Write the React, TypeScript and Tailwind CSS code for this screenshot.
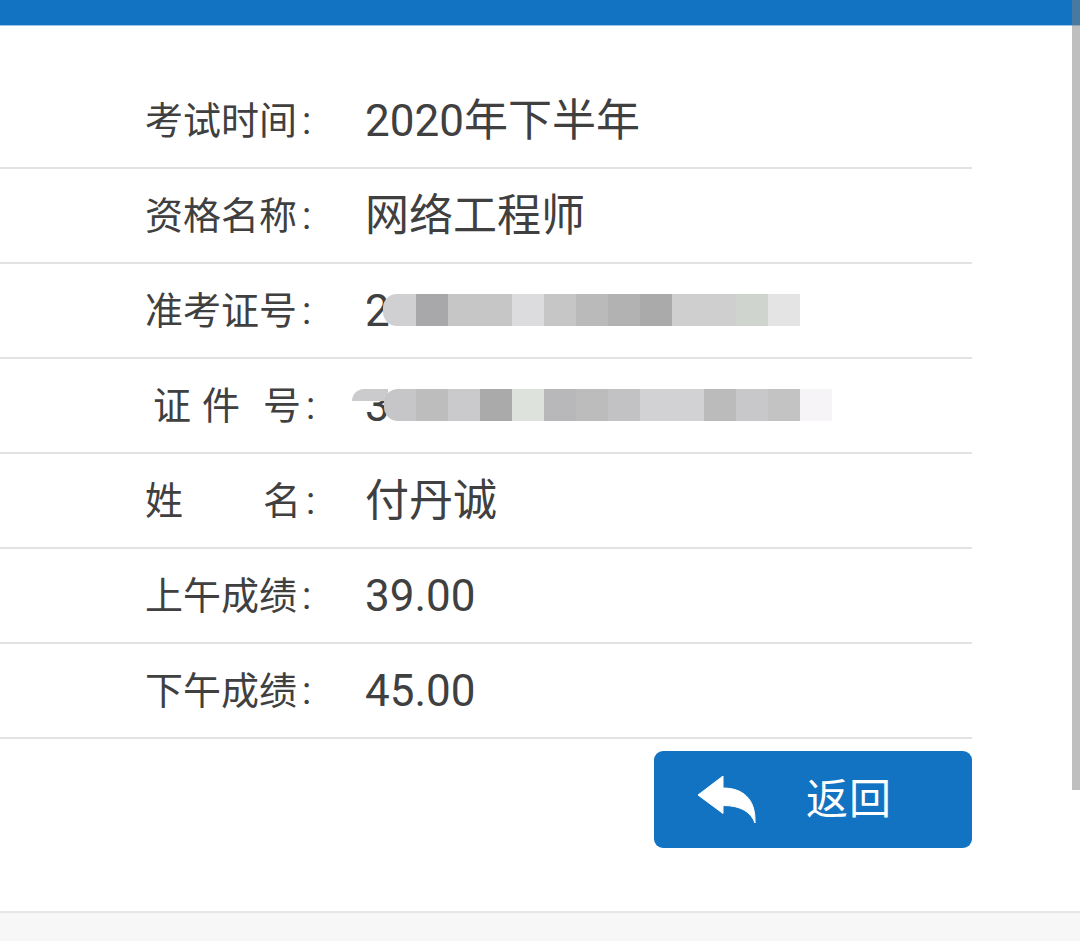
import React from "react";

const font = { fontFamily: 'Roboto, "Noto Sans CJK SC", sans-serif' };

type Block = { w: number; c: string };

const row3Blocks: Block[] = [
  { w: 33, c: "#d0d0d2" },
  { w: 32, c: "#a8a7a9" },
  { w: 64, c: "#c6c6c6" },
  { w: 32, c: "#dcdbdd" },
  { w: 32, c: "#c6c6c6" },
  { w: 32, c: "#bababa" },
  { w: 32, c: "#b2b2b2" },
  { w: 32, c: "#aaaaaa" },
  { w: 64, c: "#cfcfcf" },
  { w: 32, c: "#d0d4ce" },
  { w: 32, c: "#e4e4e4" },
];

const row4Blocks: Block[] = [
  { w: 32, c: "#c6c6c8" },
  { w: 32, c: "#bdbdbd" },
  { w: 32, c: "#cacacc" },
  { w: 32, c: "#aaaaaa" },
  { w: 32, c: "#dde2dd" },
  { w: 32, c: "#b8b8ba" },
  { w: 32, c: "#bcbcbc" },
  { w: 32, c: "#c2c2c4" },
  { w: 64, c: "#d2d2d4" },
  { w: 32, c: "#bbbbbb" },
  { w: 32, c: "#c8c8ca" },
  { w: 32, c: "#c3c3c3" },
  { w: 32, c: "#f7f4f7" },
];

function Blocks({ blocks }: { blocks: Block[] }) {
  return (
    <div className="flex h-[32px]">
      {blocks.map((b, i) => (
        <div
          key={i}
          className={i === 0 ? "h-full rounded-l-[14px]" : "h-full"}
          style={{ width: b.w, backgroundColor: b.c }}
        />
      ))}
    </div>
  );
}

function Colon() {
  return <span className="ml-[5px]">:</span>;
}

function ReplyIcon() {
  return (
    <svg width="60" height="48" viewBox="0 0 60 48" className="shrink-0">
      <path
        d="M1 19 L26 0 L26 12 C45 12 59 22 58 47 C54 36 44 29.5 26 29.5 L26 37.5 Z"
        fill="white"
        stroke="white"
        strokeWidth="1"
        strokeLinejoin="round"
      />
    </svg>
  );
}

function Row({
  label,
  children,
  overlay,
}: {
  label: React.ReactNode;
  children: React.ReactNode;
  overlay?: React.ReactNode;
}) {
  return (
    <div className="relative flex h-[95px] w-[972px] items-center border-b-2 border-[#e2e2e2]">
      <div className="flex w-[365px] shrink-0 pl-[145px] text-[38px] leading-none text-[#404040]">
        {label}
        <Colon />
      </div>
      <div className="text-[44px] leading-none text-[#404040]">{children}</div>
      {overlay}
    </div>
  );
}

export default function App() {
  return (
    <div className="relative flex h-[941px] w-full flex-col overflow-hidden bg-white" style={font}>
      <div className="h-[25px] shrink-0 bg-[#1173c1]" />
      <div className="h-px shrink-0 bg-[#9cc4e8]" />
      <div className="flex flex-1 flex-col pt-[48px]">
        <Row label="考试时间">2020年下半年</Row>
        <Row label="资格名称">网络工程师</Row>
        <Row
          label="准考证号"
          overlay={
            <div className="absolute left-[383px] top-[30px]">
              <Blocks blocks={row3Blocks} />
            </div>
          }
        >
          2
        </Row>
        <Row
          label={
            <>
              <span className="ml-[8px]">证</span>
              <span className="ml-[11px]">件</span>
              <span className="ml-[23px]">号</span>
            </>
          }
          overlay={
            <>
              <div className="absolute left-[352px] top-[30px] h-[12px] w-[36px] rounded-tl-[12px] bg-[#cbcbcd]" />
              <div className="absolute left-[384px] top-[30px]">
                <Blocks blocks={row4Blocks} />
              </div>
            </>
          }
        >
          3
        </Row>
        <Row
          label={
            <>
              <span>姓</span>
              <span className="ml-[80px]">名</span>
            </>
          }
        >
          付丹诚
        </Row>
        <Row label="上午成绩">39.00</Row>
        <Row label="下午成绩">45.00</Row>
        <div className="mt-[12px] flex w-[972px] justify-end">
          <button className="flex h-[97px] w-[318px] items-center rounded-[9px] bg-[#1173c1] pl-[43px] text-white">
            <ReplyIcon />
            <span className="ml-[49px] text-[42px] leading-none tracking-[1px]">返回</span>
          </button>
        </div>
      </div>
      <div className="h-[30px] shrink-0 border-t-2 border-[#e6e6e6] bg-[#f7f7f7]" />
      <div className="absolute right-0 top-0 h-[790px] w-[8px] bg-[rgba(128,128,128,0.5)]" />
    </div>
  );
}
